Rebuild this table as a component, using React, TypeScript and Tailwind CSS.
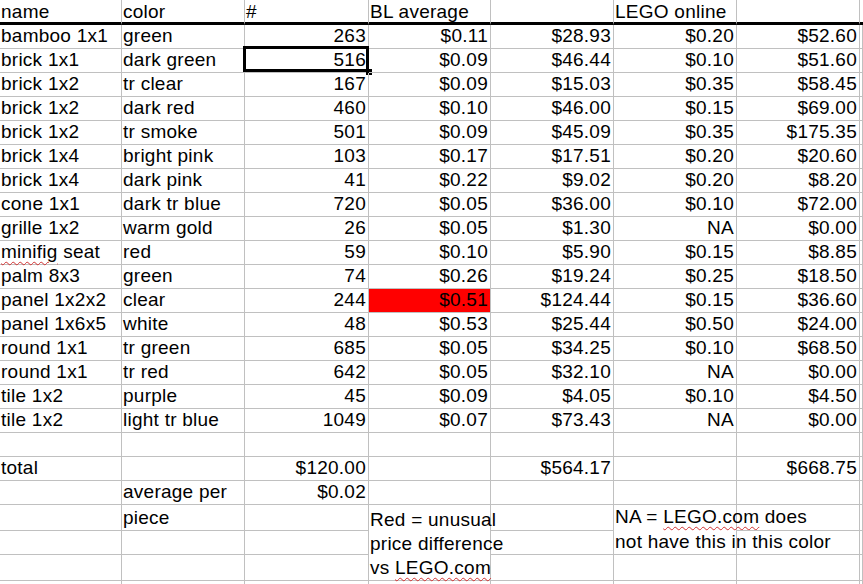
import React from "react";

type Row = [string, string, string, string, string, string, string];

const data: Row[] = [
	["bamboo 1x1", "green", "263", "$0.11", "$28.93", "$0.20", "$52.60"],
	["brick 1x1", "dark green", "516", "$0.09", "$46.44", "$0.10", "$51.60"],
	["brick 1x2", "tr clear", "167", "$0.09", "$15.03", "$0.35", "$58.45"],
	["brick 1x2", "dark red", "460", "$0.10", "$46.00", "$0.15", "$69.00"],
	["brick 1x2", "tr smoke", "501", "$0.09", "$45.09", "$0.35", "$175.35"],
	["brick 1x4", "bright pink", "103", "$0.17", "$17.51", "$0.20", "$20.60"],
	["brick 1x4", "dark pink", "41", "$0.22", "$9.02", "$0.20", "$8.20"],
	["cone 1x1", "dark tr blue", "720", "$0.05", "$36.00", "$0.10", "$72.00"],
	["grille 1x2", "warm gold", "26", "$0.05", "$1.30", "NA", "$0.00"],
	["minifig seat", "red", "59", "$0.10", "$5.90", "$0.15", "$8.85"],
	["palm 8x3", "green", "74", "$0.26", "$19.24", "$0.25", "$18.50"],
	["panel 1x2x2", "clear", "244", "$0.51", "$124.44", "$0.15", "$36.60"],
	["panel 1x6x5", "white", "48", "$0.53", "$25.44", "$0.50", "$24.00"],
	["round 1x1", "tr green", "685", "$0.05", "$34.25", "$0.10", "$68.50"],
	["round 1x1", "tr red", "642", "$0.05", "$32.10", "NA", "$0.00"],
	["tile 1x2", "purple", "45", "$0.09", "$4.05", "$0.10", "$4.50"],
	["tile 1x2", "light tr blue", "1049", "$0.07", "$73.43", "NA", "$0.00"],
];

const cell =
	"relative flex items-end whitespace-nowrap border-r border-b border-[#c0c0c0] leading-[22px] pb-px";

function Cell({
	children,
	right,
	className = "",
}: {
	children?: React.ReactNode;
	right?: boolean;
	className?: string;
}) {
	return (
		<div
			className={`${cell} ${right ? "justify-end pr-[2px]" : "pl-px"} ${className}`}
		>
			{children}
		</div>
	);
}

function Squiggle({ children }: { children: React.ReactNode }) {
	return (
		<span className="underline decoration-wavy decoration-[#d03030] decoration-1 underline-offset-[3px]">
			{children}
		</span>
	);
}

function Empty({ n }: { n: number }) {
	return (
		<>
			{Array.from({ length: n }).map((_, i) => (
				<Cell key={i} />
			))}
		</>
	);
}

export default function App() {
	const headers = ["name", "color", "#", "BL average", "", "LEGO online", "", ""];

	return (
		<div className="h-[584px] w-[863px] overflow-hidden bg-white font-['Liberation_Sans',Arial,sans-serif] text-[19px] tracking-[0.25px] text-black">
			<div className="grid grid-cols-[122px_123px_124px_122px_123px_123px_123px_1fr] grid-rows-[25px_repeat(20,24px)_26px_24px_26px_24px]">
				{headers.map((h, i) => (
					<div
						key={i}
						className={`flex items-end whitespace-nowrap border-b-[3px] border-b-black pl-px leading-[21px] ${i < 7 ? "border-r border-r-[#c0c0c0]" : ""}`}
					>
						{h}
					</div>
				))}

				{data.map((r, ri) => (
					<React.Fragment key={ri}>
						<Cell>{r[0] === "minifig seat" ? <><Squiggle>minifig</Squiggle>&nbsp;seat</> : r[0]}</Cell>
						<Cell>{r[1]}</Cell>
						<Cell right>
							{ri === 1 && (
								<>
									<span className="pointer-events-none absolute -top-[3px] -left-[2px] -right-px bottom-0 border-[3px] border-black" />
									<span className="absolute -right-[4px] -bottom-[3px] h-[6px] w-[6px] bg-black" />
								</>
							)}
							{r[2]}
						</Cell>
						<Cell right className={ri === 11 ? "bg-[#ff0000]" : ""}>
							{r[3]}
						</Cell>
						<Cell right>{r[4]}</Cell>
						<Cell right>{r[5]}</Cell>
						<Cell right>{r[6]}</Cell>
						<Cell />
					</React.Fragment>
				))}

				<Empty n={8} />

				<Cell>total</Cell>
				<Cell />
				<Cell right>$120.00</Cell>
				<Cell />
				<Cell right>$564.17</Cell>
				<Cell />
				<Cell right>$668.75</Cell>
				<Cell />

				<Cell />
				<Cell>average per</Cell>
				<Cell right>$0.02</Cell>
				<Empty n={5} />

				<Cell />
				<Cell>piece</Cell>
				<Cell />
				<div className="row-span-3 flex items-end whitespace-nowrap border-r border-b border-[#c0c0c0] pl-px leading-[24px]">
					<div>
						Red = unusual
						<br />
						price difference
						<br />
						vs <Squiggle>LEGO.com</Squiggle>
					</div>
				</div>
				<Cell />
				<div className="row-span-2 flex items-end whitespace-nowrap border-r border-b border-[#c0c0c0] pl-px leading-[25px]">
					<div>
						NA = <Squiggle>LEGO.com</Squiggle> does
						<br />
						not have this in this color
					</div>
				</div>
				<Cell />
				<Cell />

				<Empty n={6} />
				<Empty n={7} />
				<Empty n={8} />
			</div>
		</div>
	);
}
